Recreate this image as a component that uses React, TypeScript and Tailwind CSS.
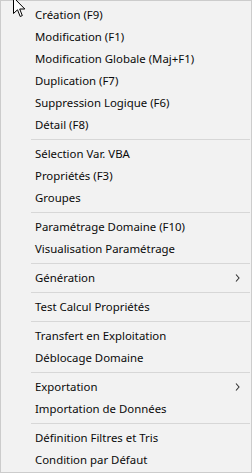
import React from "react"

type Entry = { label: string; sub?: boolean } | "sep"

const entries: Entry[] = [
  { label: "Création (F9)" },
  { label: "Modification (F1)" },
  { label: "Modification Globale (Maj+F1)" },
  { label: "Duplication (F7)" },
  { label: "Suppression Logique (F6)" },
  { label: "Détail (F8)" },
  "sep",
  { label: "Sélection Var. VBA" },
  { label: "Propriétés (F3)" },
  { label: "Groupes" },
  "sep",
  { label: "Paramétrage Domaine (F10)" },
  { label: "Visualisation Paramétrage" },
  "sep",
  { label: "Génération", sub: true },
  "sep",
  { label: "Test Calcul Propriétés" },
  "sep",
  { label: "Transfert en Exploitation" },
  { label: "Déblocage Domaine" },
  "sep",
  { label: "Exportation", sub: true },
  { label: "Importation de Données" },
  "sep",
  { label: "Définition Filtres et Tris" },
  { label: "Condition par Défaut" },
]

const App = () => {
  return (
    <div className="relative w-[252px] h-[473px] overflow-hidden">
      <div
        className="w-full h-full bg-[#f2f2f2] border border-[#cccccc] pt-[3px] pb-[1px] flex flex-col text-[11.4px] text-[#0a0a0a]"
        style={{ fontFamily: '"Noto Sans", sans-serif' }}
      >
        {entries.map((e, i) =>
          e === "sep" ? (
            <div key={i} className="shrink-0 my-[3px] ml-[30px] mr-[1px] h-px bg-[#d7d7d7]" />
          ) : (
            <div key={i} className="shrink-0 h-[22px] flex items-center pl-[34px] pr-[11px] justify-between">
              <span>{e.label}</span>
              {e.sub && (
                <svg width="5" height="8" viewBox="0 0 5 8">
                  <path d="M1 0.5 L4 4 L1 7.5" fill="none" stroke="#333" strokeWidth="1.1" />
                </svg>
              )}
            </div>
          )
        )}
      </div>
      <svg
        className="absolute left-[13px] top-[-3px]"
        width="13"
        height="21"
        viewBox="0 0 13 21"
      >
        <path
          d="M0.5 0.5 L0.5 16.5 L4.5 12.8 L7.2 19.5 L9.3 18.6 L6.7 12 L11.8 12 Z"
          fill="#fff"
          stroke="#000"
          strokeWidth="1"
          strokeLinejoin="miter"
        />
      </svg>
    </div>
  )
}

export default App
